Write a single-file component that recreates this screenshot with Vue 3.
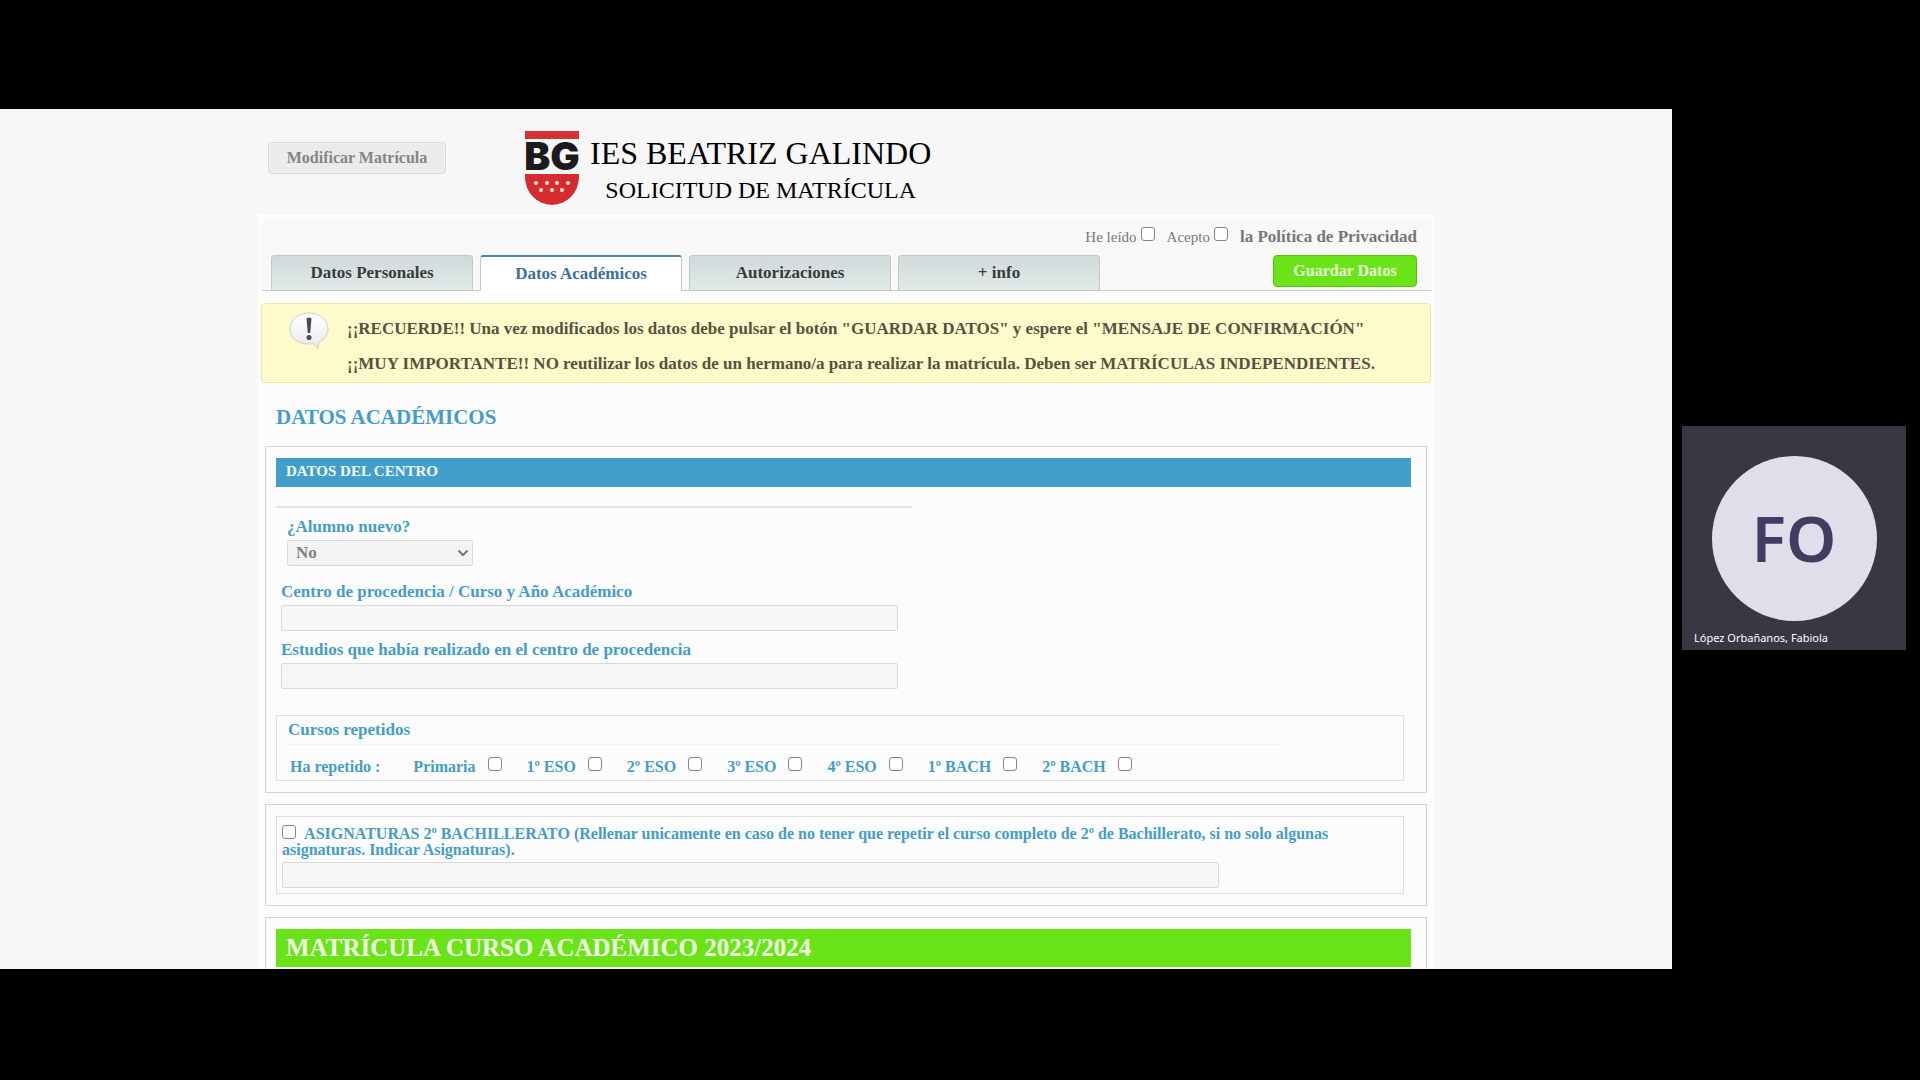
<script setup>
import { ref } from 'vue'

const tabs = [
  { id: 'personales', label: 'Datos Personales' },
  { id: 'academicos', label: 'Datos Académicos' },
  { id: 'autorizaciones', label: 'Autorizaciones' },
  { id: 'info', label: '+ info' },
]
const activeTab = ref('academicos')

const courses = ref([
  { id: 'primaria', label: 'Primaria', checked: false },
  { id: 'eso1', label: '1º ESO', checked: false },
  { id: 'eso2', label: '2º ESO', checked: false },
  { id: 'eso3', label: '3º ESO', checked: false },
  { id: 'eso4', label: '4º ESO', checked: false },
  { id: 'bach1', label: '1º BACH', checked: false },
  { id: 'bach2', label: '2º BACH', checked: false },
])

const read = ref(false)
const accepted = ref(false)
const newStudent = ref('No')
const origin = ref('')
const studies = ref('')
const hasPending = ref(false)
const pending = ref('')
</script>

<template>
  <div class="meeting">
    <main class="screen">
      <div class="page">
        <header class="masthead">
          <button type="button" class="edit-button">Modificar Matrícula</button>
          <div class="brand">
            <svg class="logo" viewBox="0 0 56 76" role="img" aria-label="BG">
              <rect x="1" y="1" width="54" height="8" fill="#d53237" />
              <text x="28" y="40" text-anchor="middle" class="logo-text">BG</text>
              <path d="M1 44H55V47A27 28 0 0 1 1 47Z" fill="#d62b31" />
              <g fill="#ffe3d4">
                <circle cx="12" cy="53" r="2" />
                <circle cx="23" cy="53" r="2" />
                <circle cx="33" cy="53" r="2" />
                <circle cx="44" cy="53" r="2" />
                <circle cx="17" cy="60" r="2" />
                <circle cx="28" cy="60" r="2" />
                <circle cx="38" cy="60" r="2" />
              </g>
            </svg>
            <div class="brand-text">
              <h1>IES BEATRIZ GALINDO</h1>
              <p>SOLICITUD DE MATRÍCULA</p>
            </div>
          </div>
        </header>

        <form class="panel" @submit.prevent>
          <div class="top">
            <div class="privacy">
              <label>He leído<input v-model="read" type="checkbox" /></label>
              <label>Acepto<input v-model="accepted" type="checkbox" /></label>
              <a href="#privacidad">la Política de Privacidad</a>
            </div>
            <div class="tab-row">
              <nav class="tabs">
                <button
                  v-for="tab in tabs"
                  :key="tab.id"
                  type="button"
                  class="tab"
                  :class="{ active: tab.id === activeTab }"
                  @click="activeTab = tab.id"
                >{{ tab.label }}</button>
              </nav>
              <button type="submit" class="save-button">Guardar Datos</button>
            </div>
          </div>

          <div class="notice">
            <svg class="bubble" viewBox="0 0 40 38" aria-hidden="true">
              <defs>
                <linearGradient id="bubble-fill" x1="0" y1="0" x2="0" y2="1">
                  <stop offset="0" stop-color="#ffffff" />
                  <stop offset="1" stop-color="#e9e7ee" />
                </linearGradient>
              </defs>
              <path d="M20 1C9 1 1 8 1 17C1 26 9 32 20 32Q22 32 24 31.500L29 36.500L29.500 30.500C35 28 39 23 39 17C39 8 31 1 20 1Z" fill="url(#bubble-fill)" stroke="#d2cfc2" />
              <path d="M17.500 6.500Q20 4.500 22.500 6.500L21.200 21H18.800Z" fill="#4c4951" />
              <circle cx="20" cy="25.500" r="2.500" fill="#4c4951" />
            </svg>
            <div class="notice-text">
              <p>¡¡RECUERDE!! Una vez modificados los datos debe pulsar el botón "GUARDAR DATOS" y espere el "MENSAJE DE CONFIRMACIÓN"</p>
              <p>¡¡MUY IMPORTANTE!! NO reutilizar los datos de un hermano/a para realizar la matrícula. Deben ser MATRÍCULAS INDEPENDIENTES.</p>
            </div>
          </div>

          <h2>DATOS ACADÉMICOS</h2>

          <section class="block">
            <h3 class="bar">DATOS DEL CENTRO</h3>
            <hr class="rule" />
            <div class="field inset">
              <label for="nuevo">¿Alumno nuevo?</label>
              <div class="select-box">
                <select id="nuevo" v-model="newStudent">
                  <option>No</option>
                  <option>Sí</option>
                </select>
                <svg viewBox="0 0 12 8" aria-hidden="true">
                  <path d="M1.500 1.500L6 6L10.500 1.500" fill="none" stroke="#777" stroke-width="2" />
                </svg>
              </div>
            </div>
            <div class="field">
              <label for="centro">Centro de procedencia / Curso y Año Académico</label>
              <input id="centro" v-model="origin" type="text" />
            </div>
            <div class="field">
              <label for="estudios">Estudios que había realizado en el centro de procedencia</label>
              <input id="estudios" v-model="studies" type="text" />
            </div>
            <div class="group repeated">
              <h4>Cursos repetidos</h4>
              <hr class="faint" />
              <div class="courses">
                <span>Ha repetido :</span>
                <label v-for="course in courses" :key="course.id">
                  {{ course.label }}<input v-model="course.checked" type="checkbox" />
                </label>
              </div>
            </div>
          </section>

          <section class="block">
            <div class="group subjects">
              <label class="subjects-label">
                <input v-model="hasPending" type="checkbox" />
                ASIGNATURAS 2º BACHILLERATO (Rellenar unicamente en caso de no tener que repetir el curso completo de 2º de Bachillerato, si no solo algunas asignaturas. Indicar Asignaturas).
              </label>
              <input v-model="pending" type="text" aria-label="Asignaturas" />
            </div>
          </section>

          <section class="block last">
            <h3 class="bar enrol">MATRÍCULA CURSO ACADÉMICO 2023/2024</h3>
          </section>
        </form>
      </div>
    </main>

    <aside class="people">
      <div class="tile">
        <div class="avatar">FO</div>
        <span class="name">López Orbañanos, Fabiola</span>
      </div>
    </aside>
  </div>
</template>

<style>
body {
  background: #000;
}
</style>

<style scoped>
.meeting,
.meeting * {
  box-sizing: border-box;
}
.meeting {
  display: grid;
  grid-template-columns: minmax(0, 1fr) 248px;
  align-items: center;
  min-height: 100vh;
  padding-bottom: 2px;
  background: #000;
  font-family: "Liberation Serif", serif;
  font-size: 16px;
  line-height: 16px;
}
h1, h2, h3, h4, p, hr {
  margin: 0;
}
button,
input,
select {
  margin: 0;
  font: inherit;
}
.screen {
  background: #f7f7f7;
  padding-left: 21px;
}
.page {
  max-width: 1177px;
  margin: 0 auto;
}

/* Header */
.masthead {
  display: flex;
  align-items: flex-start;
  height: 106px;
  padding: 20px 10px 0;
}
.edit-button {
  width: 178px;
  height: 32px;
  margin-top: 13px;
  border: 1px solid #d9d9d9;
  border-radius: 4px;
  background: #ebebeb;
  box-shadow: inset 0 0 0 1px #f1f1f1;
  color: #858585;
  font-weight: bold;
}
.brand {
  display: flex;
  gap: 10px;
  margin-left: 78px;
}
.logo {
  width: 56px;
  height: 76px;
  margin-top: 1px;
}
.logo-text {
  font: 900 39px Inter, "Liberation Sans", sans-serif;
  fill: #1b1b1d;
}
.brand-text {
  display: flex;
  flex-direction: column;
  align-items: center;
  padding-top: 6px;
  color: #000;
}
.brand-text h1 {
  font-size: 32px;
  font-weight: normal;
  line-height: 36px;
}
.brand-text p {
  font-size: 24px;
  line-height: 38px;
}

/* Form panel */
.panel {
  background: #fcfcfd;
  padding: 3px 4px 0;
  border-top: 1px solid #fff;
}
.top {
  border-bottom: 1px solid #c9cacb;
  padding: 0 14px 0 9px;
  background: #f8f8f9;
}
.privacy {
  display: flex;
  justify-content: flex-end;
  align-items: center;
  gap: 12px;
  height: 36px;
  color: #777;
}
.privacy label {
  display: flex;
  align-items: center;
  gap: 4px;
  font-size: 15px;
}
.privacy input {
  margin-bottom: 6px;
}
.privacy a {
  color: #777;
  font-size: 17px;
  font-weight: bold;
  text-decoration: none;
}
.tab-row {
  display: flex;
  justify-content: space-between;
  align-items: flex-start;
}
.tabs {
  display: flex;
  gap: 7px;
  margin-bottom: -1px;
}
.tab {
  width: 202px;
  height: 36px;
  padding: 0;
  border: 1px solid #c3c9c9;
  border-radius: 3px 3px 0 0;
  background: linear-gradient(#d0dad9, #e2e9e9);
  color: #363b3b;
  font-size: 17px;
  font-weight: bold;
}
.tab.active {
  border-color: #c9cacb;
  border-top: 2px solid #4f84ad;
  border-bottom: 0;
  background: #fff;
  color: #3a6f9f;
}
.save-button {
  width: 144px;
  height: 32px;
  border: 1px solid #56c312;
  border-radius: 4px;
  background: #6ae418;
  color: #eaffd9;
  font-weight: bold;
}
.notice {
  display: flex;
  gap: 18px;
  margin: 12px 0 0 -1px;
  padding: 7px 20px 0 27px;
  min-height: 80px;
  border: 1px solid #ece8a0;
  border-radius: 4px;
  background: #fdfbcb;
  color: #57523f;
  font-size: 17px;
  font-weight: bold;
}
.bubble {
  flex: none;
  width: 40px;
  height: 38px;
  margin-top: 1px;
}
.notice-text p {
  line-height: 35px;
}
h2 {
  margin: 22px 0 0 14px;
  color: #459dc6;
  font-size: 21px;
  line-height: 24px;
}
.block {
  margin: 0 4px 11px 3px;
  padding: 11px 15px 11px 10px;
  border: 1px solid #d3d3d5;
  background: #fcfcfd;
}
h2 + .block {
  margin-top: 17px;
}
.bar {
  padding: 5px 10px 7px;
  background: #419fc9;
  color: #f1fbff;
  font-size: 15px;
  line-height: 17px;
}
.rule {
  width: 56%;
  height: 2px;
  margin-top: 19px;
  border: 0;
  background: #e2e2e3;
}
.field {
  display: flex;
  flex-direction: column;
  align-items: flex-start;
  gap: 5px;
  margin: 11px 0 0 5px;
  color: #459dc6;
  font-size: 17px;
  font-weight: bold;
}
.inset {
  margin-left: 11px;
}
.inset + .field {
  margin-top: 18px;
}
input[type='text'] {
  display: block;
  width: 617px;
  max-width: 100%;
  height: 26px;
  padding: 0 6px;
  border: 1px solid #d9d9da;
  border-radius: 2px;
  background: #f6f6f7;
}
.select-box {
  display: grid;
  align-items: center;
  width: 186px;
}
.select-box select,
.select-box svg {
  grid-area: 1 / 1;
}
.select-box select {
  width: 100%;
  height: 26px;
  padding: 0 8px;
  appearance: none;
  border: 1px solid #d9d9da;
  border-radius: 2px;
  background: #f4f4f5;
  color: #808080;
}
.select-box svg {
  justify-self: end;
  width: 12px;
  height: 8px;
  margin-right: 4px;
  pointer-events: none;
}
input[type='checkbox'] {
  flex: none;
  width: 14px;
  height: 14px;
  appearance: none;
  border: 1px solid #858585;
  border-radius: 3px;
  background: #fff;
}
input[type='checkbox']:checked {
  background: #419fc9;
}
.group {
  margin-right: 7px;
  border: 1px solid #dededf;
  color: #459dc6;
  font-weight: bold;
}
.repeated {
  margin-top: 26px;
  padding: 6px 11px 0;
  min-height: 66px;
}
.repeated h4 {
  font-size: 17px;
}
.faint {
  width: 90%;
  height: 1px;
  margin-top: 6px;
  border: 0;
  background: #f3f3f4;
}
.courses {
  display: flex;
  align-items: center;
  gap: 25px;
  padding: 12px 0 0 2px;
}
.courses span {
  margin-right: 8px;
}
.courses label {
  display: flex;
  align-items: center;
  gap: 12px;
}
.courses input {
  margin-bottom: 6px;
}
.subjects {
  padding: 6px 30px 5px 5px;
}
.subjects-label {
  display: block;
  margin-bottom: 4px;
  padding-top: 2px;
}
.subjects-label input {
  margin-right: 5px;
  vertical-align: 0;
}
.subjects input[type='text'] {
  width: 937px;
}
.last {
  margin-bottom: 0;
  padding-bottom: 2px;
  border-bottom: 0;
}
.enrol {
  padding: 6px 10px;
  background: #6ae418;
  color: #f2ffe6;
  font-size: 25px;
  line-height: 26px;
}

/* Participant tile */
.people {
  padding: 0 14px 2px 10px;
}
.tile {
  display: flex;
  flex-direction: column;
  justify-content: space-between;
  align-items: center;
  height: 224px;
  padding: 30px 12px 5px;
  background: #393743;
  font-family: "Noto Sans", sans-serif;
}
.avatar {
  display: grid;
  place-items: center;
  width: 165px;
  height: 165px;
  padding-bottom: 2px;
  border-radius: 50%;
  background: #e1deec;
  color: #443c60;
  font-size: 64px;
  font-weight: 600;
}
.name {
  align-self: flex-start;
  color: #fff;
  font-size: 11px;
  line-height: 14px;
}
</style>
